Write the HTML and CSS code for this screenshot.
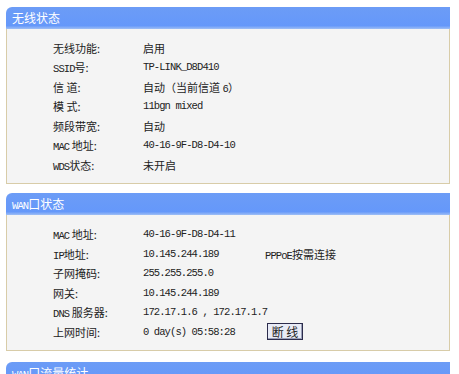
FILE: index.html
```html
<!DOCTYPE html>
<html lang="zh-CN">
<head>
    <meta charset="UTF-8">
    <title>运行状态</title>
    <link rel="stylesheet" href="styles.css">
</head>
<body>

<div class="page">

    <div class="panel">
        <div class="panel-head">无线状态</div>
        <div class="panel-body">
            <div class="row"><span>无线功能:</span><span>启用</span></div>
            <div class="row"><span><i class="en">SSID</i>号:</span><span class="en">TP-LINK_D8D410</span></div>
            <div class="row"><span>信&nbsp;道:</span><span>自动（当前信道 <i class="en">6</i>）</span></div>
            <div class="row"><span>模&nbsp;式:</span><span class="en">11bgn mixed</span></div>
            <div class="row"><span>频段带宽:</span><span>自动</span></div>
            <div class="row"><span><i class="en">MAC</i> 地址:</span><span class="en">40-16-9F-D8-D4-10</span></div>
            <div class="row"><span><i class="en">WDS</i>状态:</span><span>未开启</span></div>
        </div>
    </div>

    <div class="panel panel-wan">
        <div class="panel-head"><i class="en">WAN</i>口状态</div>
        <div class="panel-body">
            <div class="row"><span><i class="en">MAC</i> 地址:</span><span class="en">40-16-9F-D8-D4-11</span></div>
            <div class="row"><span><i class="en">IP</i>地址:</span><span class="en">10.145.244.189</span><span><i class="en">PPPoE</i>按需连接</span></div>
            <div class="row"><span>子网掩码:</span><span class="en">255.255.255.0</span></div>
            <div class="row"><span>网关:</span><span class="en">10.145.244.189</span></div>
            <div class="row"><span><i class="en">DNS</i> 服务器:</span><span class="en">172.17.1.6 , 172.17.1.7</span></div>
            <div class="row"><span>上网时间:</span><span class="en">0 day(s) 05:58:28</span><span><button class="btn">断 线</button></span></div>
        </div>
    </div>

    <div class="panel">
        <div class="panel-head"><i class="en">WAN</i>口流量统计</div>
    </div>

</div>

</body>
</html>
```

FILE: styles.css
```css
* {
    margin: 0;
    padding: 0;
    box-sizing: border-box;
}

body {
    background: #ffffff;
    font-family: "Noto Sans CJK SC", sans-serif;
    font-size: 11px;
    color: #222222;
}

.page {
    padding: 7px 9px 0 6px;
}

.panel {
    margin-bottom: 9px;
}

.panel-wan {
    margin-bottom: 11px;
}

.panel-head {
    height: 22px;
    line-height: 22px;
    padding-left: 6px;
    color: #ffffff;
    font-size: 12px;
    background: linear-gradient(#6c9cf6, #6598fa 85%, #9fbff5);
    border-radius: 6px 0 0 0;
}

.panel-body {
    background: #f4f4f4;
    border: 1px solid #d8cca8;
    border-top: none;
    padding: 9px 0 8px 46px;
}

.panel-wan .panel-body {
    padding-top: 10px;
}

.row {
    display: grid;
    grid-template-columns: 90px 122px 1fr;
    height: 19.5px;
    align-items: center;
    white-space: nowrap;
}

.en {
    font-style: normal;
    font-family: "Liberation Mono", monospace;
    font-size: 10.5px;
    letter-spacing: -0.9px;
}

.btn {
    font-family: "Noto Sans CJK SC", sans-serif;
    font-size: 12px;
    width: 36px;
    height: 17px;
    line-height: 14px;
    margin-left: 2px;
    background: #e8ebf6;
    border: 1px solid #2c2c4c;
    box-shadow: inset -1px -1px 0 #9aa0b8;
    color: #222222;
}
```
